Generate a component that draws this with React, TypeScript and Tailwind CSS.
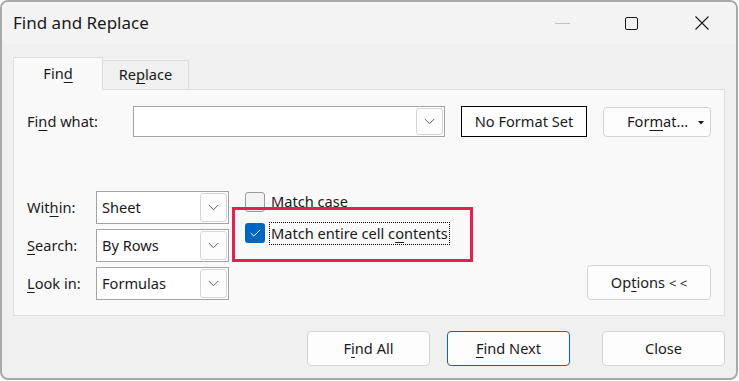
import React from "react";

const U = ({ children }: { children: React.ReactNode }) => (
  <span className="underline decoration-1 underline-offset-[3px]">{children}</span>
);

function Chevron() {
  return (
    <svg width="11" height="7" viewBox="0 0 11 7">
      <path d="M0.8 1 L5.5 5.7 L10.2 1" stroke="#606060" fill="none" strokeWidth="1" />
    </svg>
  );
}

function ChevBox({ h }: { h: string }) {
  return (
    <div className={`w-[27px] ${h} border border-[#d6d6d6] rounded-[3px] bg-[#fdfdfd] flex items-center justify-center`}>
      <Chevron />
    </div>
  );
}

function Select({ value }: { value: string }) {
  return (
    <div className="w-[133px] h-[33px] bg-white border border-[#a3a3a3] flex items-center justify-between pl-[5px] pr-[1px]">
      <span>{value}</span>
      <div className="w-[27px] h-[29px] border border-[#d6d6d6] rounded-[3px] bg-[#fdfdfd] flex items-center justify-center">
        <Chevron />
      </div>
    </div>
  );
}

function Btn({ children, w, primary }: { children: React.ReactNode; w: string; primary?: boolean }) {
  return (
    <div
      className={`${w} h-[35px] rounded-[4px] bg-[#fdfdfd] border ${
        primary ? "border-[#0067c0]" : "border-[#d3d3d3]"
      } flex items-center justify-center`}
    >
      {children}
    </div>
  );
}

export default function App() {
  return (
    <div
      className="w-[739px] h-[381px] bg-white text-[#1b1b1b] text-[14.6px]"
      style={{ fontFamily: '"Segoe UI", "Noto Sans", "Open Sans", sans-serif' }}
    >
      <div className="relative w-[738px] h-[380px] rounded-[8px] border-2 border-[#a9a9a9] bg-[#f0f0f0] overflow-hidden flex flex-col">
        {/* Title bar */}
        <div className="h-[42px] bg-[#f3f3f3] flex items-center pl-[11px] shrink-0">
          <span className="text-[17px] text-[#1a1a1a]">Find and Replace</span>
          <div className="ml-auto flex items-center pr-[27px]">
            <div className="w-[15px] h-[1px] bg-[#c4c4c4]" />
            <div className="ml-[55px] w-[13px] h-[13px] border border-[#1a1a1a] rounded-[2px]" />
            <svg className="ml-[57px]" width="14" height="14" viewBox="0 0 14 14">
              <path d="M0.5 0.5 L13.5 13.5 M13.5 0.5 L0.5 13.5" stroke="#1a1a1a" strokeWidth="1.1" />
            </svg>
          </div>
        </div>

        {/* Body */}
        <div className="flex-1 px-[11px] pt-[13px] flex flex-col">
          {/* Tabs */}
          <div className="flex items-end h-[33px]">
            <div className="relative z-10 w-[90px] h-[33px] bg-[#f9f9f9] border border-b-0 border-[#dedede] flex items-center justify-center pb-[1px]">
              <span>
                Fin<U>d</U>
              </span>
            </div>
            <div className="w-[86px] h-[30px] bg-[#f0f0f0] border border-l-0 border-[#dedede] flex items-center justify-center">
              <span>
                Re<U>p</U>lace
              </span>
            </div>
          </div>

          {/* Panel */}
          <div className="mt-[-1px] w-[712px] h-[227px] bg-[#f9f9f9] border border-[#dedede] pt-[16px] pl-[13px] flex flex-col">
            <div className="flex items-center">
              <div className="w-[106px]">
                Fi<U>n</U>d what:
              </div>
              <div className="w-[312px] h-[31px] bg-white border border-[#a3a3a3] flex items-center justify-end pr-[1px]">
                <ChevBox h="h-[27px]" />
              </div>
              <div className="ml-[16px] w-[126px] h-[31px] bg-white border border-black flex items-center justify-center">
                No Format Set
              </div>
              <div className="ml-[16px] w-[108px] h-[30px] rounded-[4px] bg-[#fdfdfd] border border-[#d3d3d3] flex items-center pl-[23px] relative">
                <span>
                  For<U>m</U>at...
                </span>
                <svg className="absolute right-[6px] top-[13px]" width="6" height="4" viewBox="0 0 6 4">
                  <path d="M0 0 L6 0 L3 3.5 Z" fill="#1a1a1a" />
                </svg>
              </div>
            </div>

            <div className="mt-[54px] flex">
              <div className="flex flex-col gap-[5px]">
                <div className="flex items-center">
                  <div className="w-[69px]">
                    Wit<U>h</U>in:
                  </div>
                  <Select value="Sheet" />
                </div>
                <div className="flex items-center">
                  <div className="w-[69px]">
                    <U>S</U>earch:
                  </div>
                  <Select value="By Rows" />
                </div>
                <div className="flex items-center">
                  <div className="w-[69px]">
                    <U>L</U>ook in:
                  </div>
                  <Select value="Formulas" />
                </div>
              </div>

              <div className="ml-[16px] pt-[1px] flex flex-col gap-[11px]">
                <div className="flex items-center h-[20px]">
                  <div className="w-[20px] h-[20px] rounded-[3px] border border-[#9a9a9a] bg-[#f3f3f3]" />
                  <span className="ml-[6px]">Match case</span>
                </div>
                <div className="flex items-center h-[20px]">
                  <div className="w-[20px] h-[20px] rounded-[3px] bg-[#0067c0] flex items-center justify-center">
                    <svg width="11" height="8" viewBox="0 0 11 8">
                      <path d="M0.8 4.2 L3.8 7 L10.2 0.8" stroke="white" fill="none" strokeWidth="1" />
                    </svg>
                  </div>
                  <span className="ml-[4px] px-[1px] border border-dotted border-black leading-[21px]">
                    Match entire cell c<U>o</U>ntents
                  </span>
                </div>
              </div>

              <div className="flex-1 flex items-end justify-end pr-[13px]">
                <div className="w-[124px] h-[35px] rounded-[4px] bg-[#fdfdfd] border border-[#d3d3d3] flex items-center justify-center">
                  <span>
                    Op<U>t</U>ions <span className="text-[13px]">&lt; &lt;</span>
                  </span>
                </div>
              </div>
            </div>
          </div>

          {/* Footer */}
          <div className="pt-[15px] flex justify-end">
            <Btn w="w-[123px]">
              <span>
                F<U>i</U>nd All
              </span>
            </Btn>
            <div className="ml-[17px]">
              <Btn w="w-[123px]" primary>
                <span>
                  <U>F</U>ind Next
                </span>
              </Btn>
            </div>
            <div className="ml-[32px]">
              <Btn w="w-[123px]">Close</Btn>
            </div>
          </div>
        </div>

        {/* Annotation highlight */}
        <div className="absolute left-[230px] top-[205px] w-[241px] h-[55px] border-[3px] border-[#e3204f] pointer-events-none" />
      </div>
    </div>
  );
}
